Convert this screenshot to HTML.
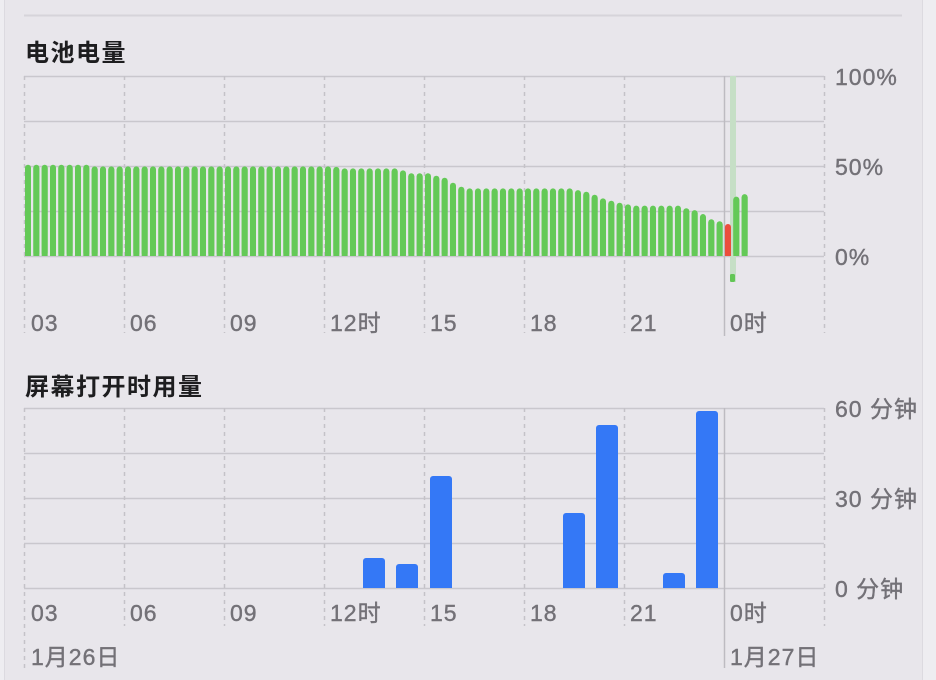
<!DOCTYPE html>
<html><head><meta charset="utf-8"><style>
html,body{margin:0;padding:0;}
body{width:936px;height:680px;background:#eeedf1;position:relative;overflow:hidden;font-family:"Liberation Sans","Noto Sans CJK SC",sans-serif;}
#panel{position:absolute;left:4px;top:0;width:917px;height:680px;background:#e8e6eb;border-left:1px solid #dcdae0;border-right:1px solid #dcdae0;}
svg{position:absolute;left:0;top:0;}
</style></head><body>
<div id="panel"></div>
<svg id="s" width="936" height="680" xmlns="http://www.w3.org/2000/svg" font-family="Liberation Sans, Noto Sans CJK SC, sans-serif">
<line x1="24" y1="15.5" x2="902" y2="15.5" stroke="#d6d4da" stroke-width="2"/>
<text x="25" y="61" font-size="24" font-weight="bold" fill="#1d1d1f" letter-spacing="1.5">电池电量</text>
<text x="25" y="395" font-size="24" font-weight="bold" fill="#1d1d1f" letter-spacing="1.5">屏幕打开时用量</text>
<g id="grid"></g>
<g id="bars"></g>
<g fill="#737177" font-size="23" stroke="#737177" stroke-width="0.4" letter-spacing="1">
<text x="31" y="331">03</text><text x="130" y="331">06</text><text x="230" y="331">09</text><text x="330" y="331">12时</text><text x="430" y="331">15</text><text x="530" y="331">18</text><text x="630" y="331">21</text><text x="730" y="331">0时</text>
<text x="31" y="621">03</text><text x="130" y="621">06</text><text x="230" y="621">09</text><text x="330" y="621">12时</text><text x="430" y="621">15</text><text x="530" y="621">18</text><text x="630" y="621">21</text><text x="730" y="621">0时</text>
<text x="31" y="665">1月26日</text><text x="730" y="665">1月27日</text>
<text x="835" y="85">100%</text><text x="835" y="175">50%</text><text x="835" y="265">0%</text>
<text x="835" y="417">60 分钟</text><text x="835" y="507">30 分钟</text><text x="835" y="597">0 分钟</text>
</g>
</svg>
<script>
var ns="http://www.w3.org/2000/svg";
function el(p,t,a){var e=document.createElementNS(ns,t);for(var k in a)e.setAttribute(k,a[k]);p.appendChild(e);return e;}
var g=document.getElementById('grid'),b=document.getElementById('bars');
[76,121,166,211,256].forEach(function(y){el(g,'line',{x1:24,x2:824,y1:y+.5,y2:y+.5,stroke:'#c9c7cd','stroke-width':1.5});});
[408,453,498,543,588].forEach(function(y){el(g,'line',{x1:24,x2:824,y1:y+.5,y2:y+.5,stroke:'#c9c7cd','stroke-width':1.5});});
for(var i=0;i<=8;i++){var x=24+i*100+.5;
 if(i==7){el(g,'line',{x1:x,x2:x,y1:76,y2:336,stroke:'#bdbbc1','stroke-width':1.5});el(g,'line',{x1:x,x2:x,y1:408,y2:668,stroke:'#bdbbc1','stroke-width':1.5});continue;}
 el(g,'line',{x1:x,x2:x,y1:76,y2:333,stroke:'#c4c2c8','stroke-width':1.5,'stroke-dasharray':'4 4'});
 el(g,'line',{x1:x,x2:x,y1:408,y2:i==0?668:626,stroke:'#c4c2c8','stroke-width':1.5,'stroke-dasharray':'4 4'});}
var v=[];
for(var k=0;k<87;k++){var p;
 if(k<8)p=50.7;else if(k<37)p=49.8;else if(k<38)p=49.5;else if(k<45)p=48.7;else if(k<46)p=47.6;else if(k<49)p=46;else if(k<50)p=44.6;else if(k<51)p=43.5;else if(k<52)p=40.7;else if(k<53)p=38.5;else if(k<66)p=37.6;else if(k<67)p=36.6;
 else p={67:35.7,68:34,69:32,70:30.7,71:29.6,72:28.7,73:28,74:28,75:28,76:28,77:28,78:28,79:26.5,80:25.5,81:23.3,82:20.4,83:19.3,84:17.8,85:33,86:34.4}[k];
 v.push(p);}
el(b,'rect',{x:730,y:76,width:6,height:206,fill:'#c6dfc6'});
el(b,'rect',{x:730,y:274,width:5,height:8,rx:1.5,fill:'#62c655'});
v.forEach(function(p,k){var x=25+k*8.333,h=p*1.8;
 el(b,'rect',{x:x,y:256-h,width:6,height:h,rx:3,fill:k==84?'#eb4e3d':'#64c957'});
 el(b,'rect',{x:x,y:256-h+3,width:6,height:h-3,fill:k==84?'#eb4e3d':'#64c957'});});
[[363,558],[396,564],[430,476],[563,513],[596,425],[663,573],[696,411]].forEach(function(a){
 el(b,'rect',{x:a[0],y:a[1],width:22,height:588-a[1],rx:3,fill:'#3478f6'});
 el(b,'rect',{x:a[0],y:a[1]+4,width:22,height:584-a[1],fill:'#3478f6'});});
</script>
</body></html>
